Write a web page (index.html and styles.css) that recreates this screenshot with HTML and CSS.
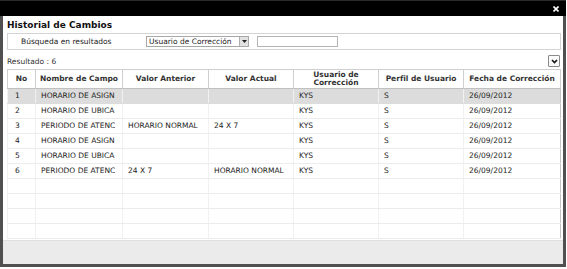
FILE: index.html
```html
<!DOCTYPE html>
<html lang="es">
<head>
<meta charset="utf-8">
<title>Historial de Cambios</title>
<link rel="stylesheet" href="styles.css">
</head>
<body>
<div class="window">
  <div class="titlebar">
    <svg class="close" width="6" height="6" viewBox="0 0 6 6"><path d="M0.5 0.5L5.5 5.5M5.5 0.5L0.5 5.5" stroke="#fff" stroke-width="1.6"/></svg>
  </div>
  <div class="body">
    <div class="content">
      <h1 class="title">Historial de Cambios</h1>
      <div class="search">
        <span class="search-label">Búsqueda en resultados</span>
        <div class="select">
          <span class="select-text">Usuario de Corrección</span>
          <span class="select-btn"><svg width="5" height="3" viewBox="0 0 5 3"><path d="M0 0H5L2.5 3Z" fill="#222"/></svg></span>
        </div>
        <div class="input"></div>
      </div>
      <div class="result-bar">
        <span class="result-text">Resultado : 6</span>
        <span class="toggle"><svg width="7" height="5" viewBox="0 0 7 5"><path d="M1 1L3.5 3.5L6 1" stroke="#111" stroke-width="1.6" fill="none"/></svg></span>
      </div>
      <table class="grid">
        <colgroup>
          <col class="c-no"><col class="c-mid"><col class="c-mid2"><col class="c-std"><col class="c-std"><col class="c-std"><col>
        </colgroup>
        <thead>
          <tr>
            <th class="th-no">No</th>
            <th>Nombre de Campo</th>
            <th>Valor Anterior</th>
            <th>Valor Actual</th>
            <th>Usuario de<br>Corrección</th>
            <th>Perfil de Usuario</th>
            <th>Fecha de Corrección</th>
          </tr>
        </thead>
        <tbody>
          <tr class="selected"><td class="no">1</td><td>HORARIO DE ASIGN</td><td></td><td></td><td>KYS</td><td>S</td><td>26/09/2012</td></tr>
          <tr><td class="no">2</td><td>HORARIO DE UBICA</td><td></td><td></td><td>KYS</td><td>S</td><td>26/09/2012</td></tr>
          <tr><td class="no">3</td><td>PERIODO DE ATENC</td><td>HORARIO NORMAL</td><td>24 X 7</td><td>KYS</td><td>S</td><td>26/09/2012</td></tr>
          <tr><td class="no">4</td><td>HORARIO DE ASIGN</td><td></td><td></td><td>KYS</td><td>S</td><td>26/09/2012</td></tr>
          <tr><td class="no">5</td><td>HORARIO DE UBICA</td><td></td><td></td><td>KYS</td><td>S</td><td>26/09/2012</td></tr>
          <tr><td class="no">6</td><td>PERIODO DE ATENC</td><td>24 X 7</td><td>HORARIO NORMAL</td><td>KYS</td><td>S</td><td>26/09/2012</td></tr>
          <tr class="empty"><td></td><td></td><td></td><td></td><td></td><td></td><td></td></tr>
          <tr class="empty"><td></td><td></td><td></td><td></td><td></td><td></td><td></td></tr>
          <tr class="empty"><td></td><td></td><td></td><td></td><td></td><td></td><td></td></tr>
          <tr class="empty"><td></td><td></td><td></td><td></td><td></td><td></td><td></td></tr>
        </tbody>
      </table>
    </div>
    <div class="footer"></div>
  </div>
</div>
</body>
</html>
```

FILE: styles.css
```css
html, body {
  margin: 0;
  padding: 0;
  background: #fff;
}

body {
  font-family: "DejaVu Sans", Verdana, sans-serif;
  font-size: 7.5px;
  color: #222;
}

.window {
  width: 566px;
  height: 267px;
  box-sizing: border-box;
  background: #505050;
  display: flex;
  flex-direction: column;
}

.titlebar {
  height: 16px;
  flex: 0 0 16px;
  background: #000;
  border-top: 1px solid #2a2a2a;
  box-sizing: border-box;
  display: flex;
  align-items: center;
  justify-content: flex-end;
  padding-right: 7px;
}

.close {
  display: block;
}

.body {
  flex: 1;
  margin: 0 3px 3px 3px;
  background: #fff;
  display: flex;
  flex-direction: column;
  min-height: 0;
}

.content {
  flex: 1;
  padding: 0 2px 0 4px;
  display: flex;
  flex-direction: column;
  min-height: 0;
}

.title {
  margin: 0;
  padding-top: 2px;
  height: 14px;
  line-height: 14px;
  font-size: 9px;
  font-weight: bold;
  color: #111;
}

.search {
  margin-top: 1px;
  height: 17px;
  box-sizing: border-box;
  border: 1px solid #d4d4d4;
  display: flex;
  align-items: center;
  padding-left: 13px;
}

.search-label {
  width: 125px;
  flex: 0 0 125px;
  color: #222;
}

.select {
  width: 103px;
  height: 11px;
  box-sizing: border-box;
  border: 1px solid #a8a8a8;
  display: flex;
  align-items: center;
}

.select-text {
  flex: 1;
  padding-left: 2px;
  white-space: nowrap;
  overflow: hidden;
  line-height: 9px;
}

.select-btn {
  width: 9px;
  height: 9px;
  box-sizing: border-box;
  border-left: 1px solid #b0b0b0;
  background: #e2e2e2;
  display: flex;
  align-items: center;
  justify-content: center;
}

.select-btn svg {
  display: block;
}

.input {
  margin-left: 8px;
  width: 81px;
  height: 11px;
  box-sizing: border-box;
  border: 1px solid #b4b4b4;
  background: #fff;
}

.result-bar {
  margin-top: 4px;
  height: 14px;
  display: flex;
  align-items: center;
  justify-content: space-between;
}

.result-text {
  color: #333;
}

.toggle {
  width: 12px;
  height: 12px;
  box-sizing: border-box;
  margin-right: 1px;
  border: 1px solid #8a8a8a;
  border-radius: 1px;
  background: #fafafa;
  display: flex;
  align-items: center;
  justify-content: center;
}

.toggle svg {
  display: block;
}

.grid {
  margin-top: 1px;
  width: 554px;
  table-layout: fixed;
  border-collapse: collapse;
  border: 1px solid #c4c4c4;
}

.c-no { width: 28px; }
.c-mid { width: 87px; }
.c-mid2 { width: 86px; }
.c-std { width: 85px; }

.grid th {
  height: 18px;
  padding: 0 2px;
  font-weight: bold;
  color: #333;
  line-height: 8.5px;
  text-align: center;
  vertical-align: middle;
  border: 1px solid #cfcfcf;
  border-bottom-color: #c0c0c0;
  white-space: nowrap;
  overflow: hidden;
  background: #fff;
}

.grid td {
  height: 14px;
  padding: 0 5px;
  line-height: 14px;
  white-space: nowrap;
  overflow: hidden;
  border-bottom: 1px solid #ececec;
  border-left: 1px solid #f1f1f1;
  color: #222;
}

.grid td.no {
  padding-left: 7px;
}

.grid tr.selected td {
  background: #dcdcdc;
  border-bottom-color: #dcdcdc;
}

.footer {
  flex: 0 0 23px;
  background: #ebebeb;
  border-top: 1px solid #e0e0e0;
}
```
